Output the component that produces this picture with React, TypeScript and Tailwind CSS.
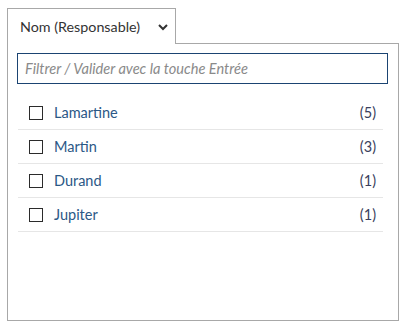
import React from "react";

const rows = [
  { name: "Lamartine", count: 5 },
  { name: "Martin", count: 3 },
  { name: "Durand", count: 1 },
  { name: "Jupiter", count: 1 },
];

export default function App() {
  return (
    <div className="w-[409px] h-[330px] bg-white pl-[7px] pt-[8px]" style={{ fontFamily: "Lato, 'Liberation Sans', sans-serif" }}>
      <div className="flex flex-col w-[392px]">
        <div className="relative z-10 -mb-px flex h-[36px] w-[169px] items-center justify-between border border-b-0 border-[#a8a8a8] bg-white pl-[12px] pr-[6px]">
          <span className="text-[14.3px] text-[#333333]">Nom (Responsable)</span>
          <svg width="12" height="12" viewBox="0 0 12 12">
            <path d="M2 4 L6 8 L10 4" fill="none" stroke="#333" strokeWidth="2" />
          </svg>
        </div>
        <div className="h-[278px] border border-[#a8a8a8] pl-[9px] pr-[10px] pt-[9px]">
          <div className="flex h-[31px] items-center border-[1.5px] border-[#1b4472] px-[7px]">
            <span className="text-[14.6px] italic text-[#8a8a8a]">Filtrer / Valider avec la touche Entrée</span>
          </div>
          <div className="mt-[12px] mr-[5px] ml-[1px] flex flex-col">
            {rows.map((r) => (
              <div key={r.name} className="flex h-[34px] items-center border-b border-[#e6e6e6] pl-[11px] pr-[7px]">
                <div className="h-[14px] w-[14px] border-[1.5px] border-[#2b2b2b]" />
                <span className="ml-[11px] flex-1 text-[14.5px] text-[#2b5886]">{r.name}</span>
                <span className="text-[14.5px] text-[#3a3f5c]">({r.count})</span>
              </div>
            ))}
          </div>
        </div>
      </div>
    </div>
  );
}
